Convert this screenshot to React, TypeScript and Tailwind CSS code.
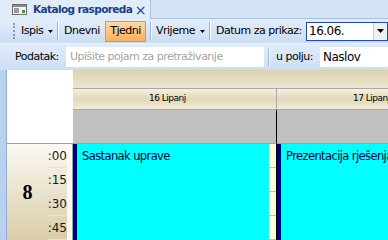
import React from 'react';

const days = [
  { label: '16 Lipanj', event: 'Sastanak uprave' },
  { label: '17 Lipanj', event: 'Prezentacija rješenja' },
];

const minutes = [':00', ':15', ':30', ':45'];

function Caret() {
  return (
    <svg width="5" height="3" viewBox="0 0 5 3" className="ml-[5px] shrink-0">
      <path d="M0 0h5L2.5 3z" fill="#000" />
    </svg>
  );
}

function Sep({ className = '' }: { className?: string }) {
  return <div className={`w-[2px] h-[18px] shrink-0 border-l border-[#9bb7dc] bg-white/80 ${className}`} />;
}

function TabIcon() {
  return (
    <svg width="15" height="11" viewBox="0 0 15 11" className="shrink-0">
      <rect x="0.5" y="0.5" width="14" height="10" fill="#f4f4f4" stroke="#6d6d6d" />
      <rect x="1" y="1" width="13" height="2" fill="#8a8a8a" />
      <rect x="2" y="4" width="5" height="5" fill="#9a9a9a" />
      <rect x="10" y="6" width="3" height="3" fill="#3c9a3c" />
    </svg>
  );
}

export default function App() {
  return (
    <div className="w-[388px] h-[240px] overflow-hidden bg-white font-['DejaVu_Sans',sans-serif] text-[11px] tracking-[-0.5px] text-black whitespace-nowrap">
      {/* tab strip */}
      <div className="h-[19px] flex bg-[#d4e3f6] border-b border-[#a9c2e4]">
        <div className="w-[151px] h-[19px] flex items-center bg-[#e1ecf9] border-r border-[#a9c2e4] pl-[12px] pr-[4px]">
          <TabIcon />
          <span className="ml-[6px] font-bold text-[#15428b] text-[10.5px] tracking-[-0.6px]">Katalog rasporeda</span>
          <span className="ml-auto text-[#15428b] text-[14px] leading-none">×</span>
        </div>
      </div>

      {/* toolbar 1 */}
      <div className="h-[24px] flex items-center bg-gradient-to-b from-[#e3eefb] to-[#cadcf3] pl-[13px]">
        <div className="w-[2px] h-[16px] shrink-0 border-l-2 border-dotted border-[#7d9cc8]" />
        <span className="ml-[6px] w-[22px]">Ispis</span>
        <Caret />
        <Sep className="ml-[4px]" />
        <span className="ml-[5px] w-[36px]">Dnevni</span>
        <div className="ml-[5px] w-[41px] h-[21px] shrink-0 flex items-center justify-center border border-[#e09a3c] bg-gradient-to-b from-[#ffd9a0] to-[#f9b25a]">Tjedni</div>
        <Sep className="ml-[4px]" />
        <span className="ml-[4px] w-[39px]">Vrijeme</span>
        <Caret />
        <Sep className="ml-[4px]" />
        <span className="ml-[5px] w-[86px]">Datum za prikaz:</span>
        <div className="ml-[4px] flex-1 h-[19px] flex items-center bg-white border border-[#2246c8]">
          <span className="flex-1 pl-[2px] text-[12px]">16.06.</span>
          <div className="w-[14px] h-[17px] flex items-center justify-center bg-[#f2f1ee] border-l border-[#d0d0d0]">
            <svg width="7" height="4" viewBox="0 0 7 4">
              <path d="M0 0h7L3.5 4z" fill="#000" />
            </svg>
          </div>
        </div>
      </div>

      {/* toolbar 2 */}
      <div className="h-[27px] flex items-center bg-gradient-to-b from-[#e1ecfa] to-[#cddef4] border-t border-[#eef4fc] pl-[15px]">
        <span className="w-[45px]">Podatak:</span>
        <div className="ml-[6px] w-[198px] h-[20px] shrink-0 flex items-center bg-white pl-[4px] text-[#a3a3a3]">
          Upišite pojam za pretraživanje
        </div>
        <Sep className="ml-[4px]" />
        <span className="ml-[6px] w-[40px]">u polju:</span>
        <div className="ml-[4px] flex-1 h-[20px] flex items-center bg-white pl-[3px] text-[12px]">Naslov</div>
      </div>

      {/* scheduler */}
      <div className="flex h-[170px]">
        <div className="w-[7px] bg-[#b9d0ef] border-r border-[#8eaedb]" />
        {/* left column */}
        <div className="w-[66px] flex flex-col">
          <div className="h-[76px] bg-white border-b border-[#a0a0a0]" />
          <div className="h-[96px] flex bg-gradient-to-b from-[#fbf9f2] to-[#d9cca7] border-r border-[#a0a0a0]">
            <div className="w-[41px] flex items-center justify-center font-['Liberation_Serif',serif] font-bold text-[20px] tracking-normal">8</div>
            <div className="w-[19px] flex flex-col">
              {minutes.map((m) => (
                <div key={m} className="h-[24px] border-b border-[#e6e2d6] flex items-center justify-end text-[12px] tracking-normal text-[#1a1a1a]">
                  {m}
                </div>
              ))}
            </div>
            <div className="flex-1 bg-[#fbfaf5]" />
          </div>
        </div>
        {/* days */}
        <div className="flex-1 flex flex-col overflow-hidden">
          <div className="h-[21px] bg-gradient-to-b from-[#dcd2b2] to-[#ece5ce] border-b border-[#a8a8a8]" />
          <div className="flex">
            {days.map((d) => (
              <div key={d.label} className="w-[204px] shrink-0 flex flex-col">
                <div className="h-[21px] flex items-center pl-[76px] text-[9px] bg-gradient-to-b from-[#f5f1e2] via-[#e2d8b8] to-[#f1ecda] border-b border-r border-[#a8a8a8]">
                  {d.label}
                </div>
                <div className="h-[34px] bg-[#c0c0c0] border-b border-r border-b-[#a0a0a0] border-r-black" />
                <div className="h-[96px] flex border-r border-black">
                  <div className="w-[4px] bg-[#000080]" />
                  <div className="flex-1 bg-[#00ffff] pl-[5px] pt-[6px] text-[11.5px] tracking-[-0.6px] text-[#000040] leading-[13px]">
                    {d.event}
                  </div>
                  <div className="w-[7px] flex flex-col bg-[#ffffd6]">
                    {minutes.map((m) => (
                      <div key={m} className="h-[24px] border-b border-[#b9b7d6]" />
                    ))}
                  </div>
                </div>
              </div>
            ))}
          </div>
        </div>
      </div>
    </div>
  );
}
